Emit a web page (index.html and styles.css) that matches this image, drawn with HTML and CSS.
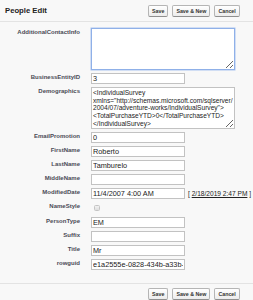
FILE: index.html
```html
<!DOCTYPE html>
<html>
<head>
<meta charset="utf-8">
<link rel="stylesheet" href="styles.css">
</head>
<body>
<div class="page">
  <div class="head">
    <div class="title">People Edit</div>
    <div class="btns">
      <button class="btn">Save</button>
      <button class="btn">Save &amp; New</button>
      <button class="btn">Cancel</button>
    </div>
  </div>
  <div class="form">
    <label class="lbl">AdditionalContactInfo</label>
    <div class="fld"><textarea class="ta focus"></textarea></div>

    <label class="lbl">BusinessEntityID</label>
    <div class="fld"><input class="in" value="3"></div>

    <label class="lbl">Demographics</label>
    <div class="fld"><textarea class="ta">&lt;IndividualSurvey xmlns="http://schemas.microsoft.com/sqlserver/2004/07/adventure-works/IndividualSurvey"&gt;
&lt;TotalPurchaseYTD&gt;0&lt;/TotalPurchaseYTD&gt;
&lt;/IndividualSurvey&gt;</textarea></div>

    <label class="lbl">EmailPromotion</label>
    <div class="fld"><input class="in" value="0"></div>

    <label class="lbl">FirstName</label>
    <div class="fld"><input class="in" value="Roberto"></div>

    <label class="lbl">LastName</label>
    <div class="fld"><input class="in" value="Tamburelo"></div>

    <label class="lbl">MiddleName</label>
    <div class="fld"><input class="in" value=""></div>

    <label class="lbl">ModifiedDate</label>
    <div class="fld date"><input class="in" value="11/4/2007 4:00 AM"><span class="dlink">[&nbsp;<a href="#">2/18/2019 2:47 PM</a>&nbsp;]</span></div>

    <label class="lbl">NameStyle</label>
    <div class="fld chk"><span class="cb"></span></div>

    <label class="lbl">PersonType</label>
    <div class="fld"><input class="in" value="EM"></div>

    <label class="lbl">Suffix</label>
    <div class="fld"><input class="in" value=""></div>

    <label class="lbl">Title</label>
    <div class="fld"><input class="in" value="Mr"></div>

    <label class="lbl">rowguid</label>
    <div class="fld"><input class="in" value="e1a2555e-0828-434b-a33b-6fd7c1b3c6c1"></div>
  </div>
  <div class="foot">
    <div class="btns">
      <button class="btn">Save</button>
      <button class="btn">Save &amp; New</button>
      <button class="btn">Cancel</button>
    </div>
  </div>
</div>
</body>
</html>
```
FILE: styles.css
```css
html, body {
  margin: 0;
  padding: 0;
  background: #f8f8f8;
}
.page {
  width: 253px;
  height: 300px;
  font-family: "Liberation Sans", Arial, sans-serif;
  color: #222;
  overflow: hidden;
}
.head {
  display: flex;
  align-items: center;
  height: 21px;
  border-bottom: 1px solid #e3e3e3;
}
.title {
  font-weight: bold;
  font-size: 7.7px;
  color: #222;
  padding-left: 5px;
  width: 143px;
}
.btns {
  display: flex;
  gap: 4px;
}
.btn {
  height: 12px;
  margin: 0;
  padding: 0 3px;
  font-family: "Liberation Sans", Arial, sans-serif;
  font-size: 5.3px;
  font-weight: bold;
  color: #333;
  background: linear-gradient(#ffffff, #ececec);
  border: 1px solid #b5b5b5;
  border-bottom-color: #8f8f8f;
  border-radius: 2px;
  line-height: 10px;
}
.form {
  display: grid;
  grid-template-columns: 80px 1fr;
  column-gap: 11px;
  row-gap: 3px;
  padding-top: 6px;
}
.lbl {
  text-align: right;
  font-size: 6px;
  font-weight: bold;
  color: #4a4a56;
  padding-top: 1px;
  line-height: 7px;
}
.fld {
  display: flex;
  align-items: flex-start;
}
.in {
  box-sizing: border-box;
  width: 94px;
  height: 11px;
  margin: 0;
  padding: 0 1px;
  border: 1px solid #c2c2c2;
  background: #fff;
  font-family: "Liberation Sans", Arial, sans-serif;
  font-size: 7.3px;
  color: #222;
  outline: none;
}
.ta {
  box-sizing: border-box;
  width: 144px;
  height: 42px;
  margin: 0;
  padding: 1px 0 0 1px;
  border: 1px solid #c2c2c2;
  background: #fff;
  font-family: "Liberation Sans", Arial, sans-serif;
  font-size: 6.6px;
  line-height: 7.7px;
  color: #222;
  resize: both;
  outline: none;
  overflow: hidden;
}
.ta.focus {
  border-color: #8fb0e8;
  box-shadow: 0 0 0 0.5px #a9c3f0;
}
.date {
  gap: 3px;
  align-items: center;
}
.dlink {
  font-size: 6.6px;
  color: #222;
  white-space: nowrap;
}
.dlink a {
  color: #222;
  text-decoration: underline;
}
.chk {
  height: 12px;
  align-items: center;
  padding-left: 3px;
}
.cb {
  box-sizing: border-box;
  width: 6px;
  height: 6px;
  border: 1px solid #c4c4c4;
  border-radius: 1.5px;
  background: linear-gradient(#f1f1f1, #dedede);
}
.foot {
  margin-top: 13px;
  border-top: 1px solid #e3e3e3;
  padding-top: 4px;
  padding-left: 148px;
}
```
